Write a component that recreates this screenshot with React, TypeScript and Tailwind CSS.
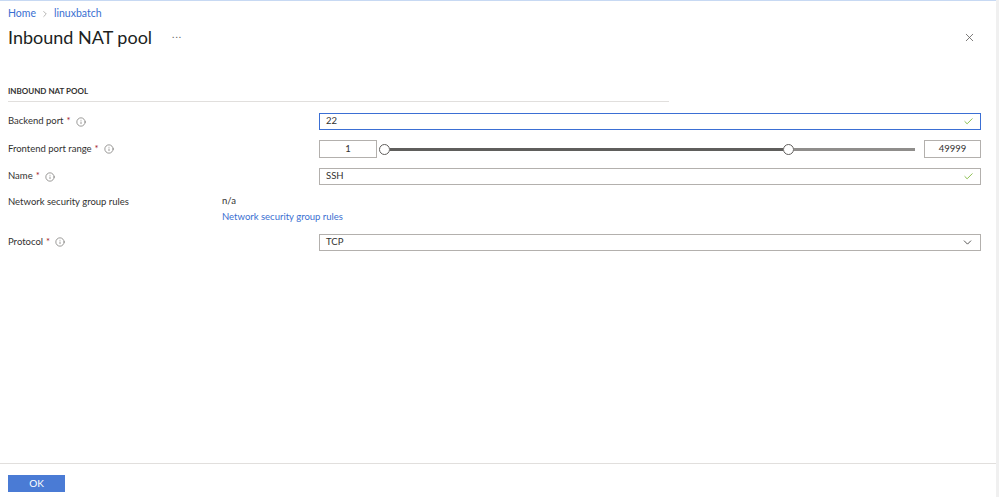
import { Check, ChevronDown, ChevronRight, Info, X } from 'lucide-react';

function Label({ text, required = true }: { text: string; required?: boolean }) {
  return (
    <div className="flex items-center gap-[5px] text-[9.5px] text-[#323130]">
      <span>
        {text}
        {required && <span className="ml-[3px] text-[#a4262c]">*</span>}
      </span>
      {required && <Info className="h-[10px] w-[10px] text-[#605e5c]" strokeWidth={1.5} />}
    </div>
  );
}

function TextBox({ value, focused = false, valid = false, select = false }: { value: string; focused?: boolean; valid?: boolean; select?: boolean }) {
  return (
    <div
      className={`flex h-[17px] flex-1 items-center justify-between px-[6px] text-[9.5px] text-[#323130] ${
        focused ? 'border border-[#3b6fd4]' : 'border border-[#b3b0ad]'
      }`}
    >
      <span>{value}</span>
      {valid && <Check className="h-[11px] w-[11px] text-[#57a300]" strokeWidth={1.5} />}
      {select && <ChevronDown className="h-[13px] w-[13px] text-[#323130]" strokeWidth={1.5} />}
    </div>
  );
}

export default function App() {
  return (
    <div className="flex h-[497px] w-[999px] bg-white font-['Lato',sans-serif]">
      <div className="flex flex-1 flex-col border-t border-[#c7d9f3]">
        <div className="flex-1 px-2">
          <div className="flex h-[23px] items-center gap-[4px] pt-[2px] text-[10.5px] text-[#3a6fd1]">
            <span>Home</span>
            <ChevronRight className="h-[10px] w-[10px] text-[#8a8886]" strokeWidth={1.5} />
            <span>linuxbatch</span>
          </div>
          <div className="flex h-[26px] items-center justify-between">
            <div className="flex items-center">
              <h1 className="text-[18px] text-[#201f1e]">Inbound NAT pool</h1>
              <span className="ml-[20px] pb-[6px] text-[10px] tracking-[1px] text-[#605e5c]">...</span>
            </div>
            <X className="mr-[12px] h-[13px] w-[13px] text-[#605e5c]" strokeWidth={1.5} />
          </div>

          <div className="mt-[35px] w-[661px] border-b border-[#e1dfdd] pb-[4px] text-[8px] font-bold text-[#323130]">
            INBOUND NAT POOL
          </div>

          <div className="mr-[7px] mt-[11px] flex flex-col">
            <div className="flex h-[17px] items-center">
              <div className="w-[311px]">
                <Label text="Backend port" />
              </div>
              <TextBox value="22" focused valid />
            </div>

            <div className="mt-[10px] flex h-[18px] items-center">
              <div className="w-[311px]">
                <Label text="Frontend port range" />
              </div>
              <div className="flex h-[18px] w-[58px] items-center justify-center border border-[#b3b0ad] text-[9.5px] text-[#323130]">
                1
              </div>
              <div className="ml-[2px] mr-[9px] flex flex-1 items-center">
                <div className="h-[11px] w-[11px] rounded-full border-[1.5px] border-[#605e5c] bg-white" />
                <div className="h-[3px] flex-1 bg-[#5f5e5c]" />
                <div className="h-[11px] w-[11px] rounded-full border-[1.5px] border-[#605e5c] bg-white" />
                <div className="h-[3px] w-[121px] bg-[#8f8d8b]" />
              </div>
              <div className="flex h-[18px] w-[57px] items-center justify-center border border-[#b3b0ad] text-[9.5px] text-[#323130]">
                49999
              </div>
            </div>

            <div className="mt-[10px] flex h-[17px] items-center">
              <div className="w-[311px]">
                <Label text="Name" />
              </div>
              <TextBox value="SSH" valid />
            </div>

            <div className="mt-[9px] flex">
              <div className="w-[214px] pt-[1px] text-[9.5px] text-[#323130]">Network security group rules</div>
              <div className="flex flex-col text-[9.5px]">
                <span className="text-[#323130]">n/a</span>
                <span className="mt-[2px] text-[#3a6fd1]">Network security group rules</span>
              </div>
            </div>

            <div className="mt-[9px] flex h-[17px] items-center">
              <div className="w-[311px]">
                <Label text="Protocol" />
              </div>
              <TextBox value="TCP" select />
            </div>
          </div>
        </div>

        <div className="h-[34px] border-t border-[#e1dfdd] px-2 pt-[11px]">
          <button className="flex h-[17px] w-[57px] items-center justify-center bg-[#4a7bd5] text-[10px] text-white">
            OK
          </button>
        </div>
      </div>
      <div className="w-[3px] bg-[#f0f0f0]" />
    </div>
  );
}
